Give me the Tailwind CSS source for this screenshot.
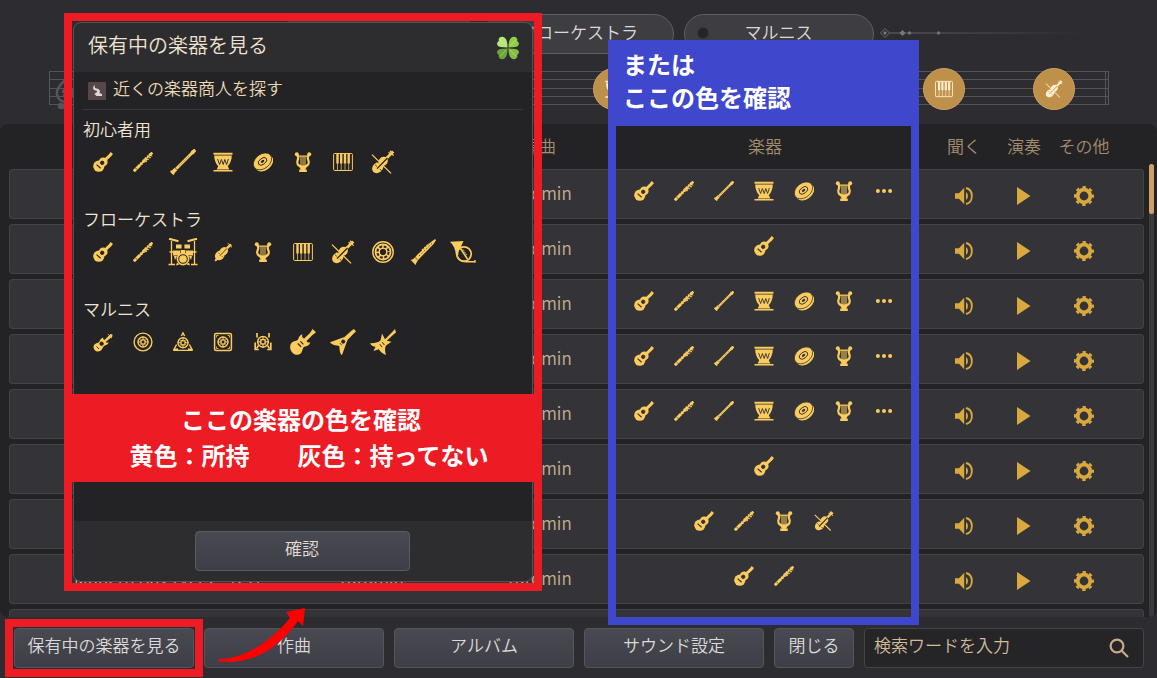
<!DOCTYPE html>
<html lang="ja">
<head>
  <meta charset="UTF-8">
  <meta name="viewport" content="width=device-width, initial-scale=1.0">
  <title>楽器の確認</title>
  <script src="https://cdn.jsdelivr.net/npm/@tailwindcss/browser@4"></script>
</head>
<body class="relative flex flex-col h-screen overflow-hidden bg-[#2d2d31] font-['Noto_Sans_CJK_JP',sans-serif] font-[350] text-[17px] leading-6 text-[#dcdad8]">

  <!-- Icon sprite: shapes take currentColor, cut-outs take the fill and stroke of the svg -->
  <svg class="absolute size-0" xmlns="http://www.w3.org/2000/svg">
    <symbol id="lute" viewBox="0 0 20 20">
      <g fill="currentColor" stroke="none"><circle cx="5.8" cy="14.2" r="5.6"/><circle cx="10.2" cy="9.9" r="4.4"/><path d="M10 8 16 2.2 17.6 0l2.400 2-2 2.400L12 10z"/></g>
      <circle cx="9.2" cy="10.8" r="1.7"/><path d="M3.6 12.6 7.6 16.2" stroke-width="1.2"/>
    </symbol>
    <symbol id="flute" viewBox="0 0 20 20">
      <g stroke="currentColor" fill="none"><path d="M.8 19.200 7 13" stroke-width="3"/><path d="M6 14 19 1" stroke-width="1.600"/><path d="M7.600 12.400 14 6" stroke-width="3" stroke-dasharray="2 1"/><path d="M10 8.600 17 1.800M12.400 10 19 3.600" stroke-width="1.500" stroke-dasharray="1.600 1.200"/><path d="M16.500 3.500 19.400.6" stroke-width="2.600"/></g>
      <path d="M2.400 15.800 4.400 17.800" stroke-width=".7"/>
    </symbol>
    <symbol id="recorder" viewBox="0 0 26 26">
      <g stroke="currentColor" fill="none"><path d="M2 24 24 2" stroke-width="2.800"/><path d="M.6 21.800 4.200 25.400M21.400 2 24 4.600" stroke-width="1.500"/><path d="M1.600 24.400 6 20" stroke-width="3.800"/><path d="M21.600 4.400 25.300.7" stroke-width="3.400"/></g>
      <path d="M9 17 19 7" stroke-width=".6" stroke-dasharray="1 1.600"/><path d="M5.200 19 7 20.800" stroke-width=".7"/>
    </symbol>
    <symbol id="drum" viewBox="0 0 20 20">
      <g fill="currentColor" stroke="none"><path d="M.5.8h19v2H.5zM1.200 3.600h17.600c0 4-1.400 8-4 10.600l1.600 3.200H3.600l1.600-3.200C2.600 11.600 1.200 7.600 1.200 3.600zM.5 18h19v1.600H.5z"/></g>
      <path d="M4.600 7 6.600 12.500 8.400 7.500 10.200 12.500 11.800 7.500 13.600 12.500 15.400 7" fill="none" stroke-width=".9"/>
    </symbol>
    <symbol id="cymbal" viewBox="0 0 20 20">
      <g transform="rotate(-38 10 10)"><ellipse cx="10.200" cy="12" rx="10" ry="6.600" fill="currentColor" stroke="none"/><ellipse cx="10" cy="9.200" rx="10.200" ry="7.200" fill="currentColor" stroke-width=".7"/><ellipse cx="10" cy="9.200" rx="4.800" ry="3" fill="none" stroke-width=".9"/><ellipse cx="10" cy="9.200" rx="2" ry="1.200" stroke="none"/></g>
    </symbol>
    <symbol id="lyre" viewBox="0 0 20 20">
      <g stroke="currentColor" fill="none"><path d="M4.200 3.200C7.500 7 2.600 8.500 4.600 12c1 2 3 2.600 5.400 2.600s4.400-.6 5.400-2.600c2-3.500-2.900-5 .4-8.800" stroke-width="2.200"/><path d="M5 4.200H15" stroke-width="1.300"/><path d="M8 4.500V13M10 4.500V13M12 4.500V13" stroke-width="1"/></g>
      <g fill="currentColor" stroke="none"><circle cx="3.800" cy="2.200" r="2"/><circle cx="16.200" cy="2.200" r="2"/><path d="M5.500 13.500h9L12.200 17.500h1.600V20H6.200v-2.500h1.600z"/></g>
    </symbol>
    <symbol id="piano" viewBox="0 0 20 20">
      <rect x=".6" y="1.500" width="18.800" height="17" rx="1" fill="none" stroke="currentColor" stroke-width="1"/>
      <path d="M3.300 2h2.400v9.500H3.300zM7 2h2.400v9.500H7zM10.800 2h2.400v9.500h-2.400zM14.500 2h2.400v9.500h-2.400z" fill="currentColor" stroke="none"/>
      <path d="M4.500 11v7M8.200 11v7M12 11v7M15.700 11v7" stroke="currentColor" stroke-width=".7"/>
    </symbol>
    <symbol id="violin" viewBox="0 0 24 24">
      <g fill="currentColor" stroke="none"><ellipse cx="6.800" cy="17.600" rx="6.200" ry="5" transform="rotate(-42 6.800 17.600)"/><ellipse cx="12.300" cy="11.200" rx="4.800" ry="4.300" transform="rotate(-42 12.300 11.200)"/><path d="M12 9.500 19 3l2-2.600 2.400 2.200L20.600 5 14 12z"/></g>
      <path d="M1 4.600 20 23.400M17.600 2.200 19.600 4.200M20.800 3.800 22.600 5.600M19 .8 20.600 2.400" fill="none" stroke="currentColor" stroke-width="1.300"/>
      <path d="M6 18.600 16.500 8" stroke-width="1.300"/><path d="M4.200 14.800 5.800 16.400M8.800 19 10.400 20.600M6 11.600 7.600 13.200" stroke-width=".9"/>
    </symbol>
    <symbol id="drumkit" viewBox="0 0 30 28">
      <g stroke="currentColor" fill="none" stroke-width="1.300"><path d="M3.500 3v23M26.500 3v23M.5 26.500h6.500M23 26.500h6.500M1.500 14h7M21.500 14h7"/><path d="M1 .8 10.500 3.200M29 .8 19.500 3.200" stroke-width="2.200"/><circle cx="15" cy="21" r="5.600" stroke-width="1.600"/></g>
      <g fill="currentColor" stroke="none"><path d="M8 6.500h5.600v4H8zM16.400 6.500H22v4h-5.600zM5 12.500h7v5H5zM18 12.500h7v5h-7zM12.600 12h4.800v3h-4.800zM6 18h3l-2 4zM24 18h-3l2 4z"/><circle cx="15" cy="21" r="3.800"/><path d="m9 24.500 2.500 2-3.500 1zM21 24.500l-2.500 2 3.500 1z"/></g>
    </symbol>
    <symbol id="cello" viewBox="0 0 20 20">
      <g fill="currentColor" stroke="none"><ellipse cx="6.800" cy="13.400" rx="5.200" ry="4.500" transform="rotate(-45 6.800 13.400)"/><ellipse cx="10.800" cy="9.200" rx="4.200" ry="3.800" transform="rotate(-45 10.800 9.200)"/><path d="m11 7.500 4.500-4.600 1.500-1.500 2 1.800-2 1.800-4.500 4.400zM3.200 15.200 1.600 18.400l1 1 3-2.200z"/></g>
      <path d="M6.800 13.800 14 6.400" stroke-width=".8"/><path d="M5.400 10.600 6.600 11.800M9 14.200 10.200 15.400" stroke-width=".7"/>
      <path d="M14.800 1.200 16.200 2.600M17.600 4 19 5.400" stroke="currentColor" stroke-width="1"/>
    </symbol>
    <symbol id="handpan" viewBox="0 0 22 22">
      <circle cx="11" cy="11" r="10.200" fill="none" stroke="currentColor" stroke-width="1.500"/><circle cx="11" cy="11" r="8.400" fill="currentColor" stroke="none"/>
      <circle cx="11" cy="11" r="2.700"/><circle cx="11" cy="11" r="5.600" fill="none" stroke-width="2" stroke-dasharray="2.800 1.600"/>
    </symbol>
    <symbol id="clarinet" viewBox="0 0 26 26">
      <g fill="currentColor" stroke="none"><path d="M.5 20.800C3 21 5 18.500 7 16L21 3l4-3 1 1.200-2.600 4L10 19c-2 2-3.600 4-4.400 7z"/></g>
      <path d="M9 17 23 3.500" stroke-width=".8" stroke-dasharray="1.500 1.800"/><path d="M5.200 18.500 7.500 20.800" stroke-width=".7"/>
      <path d="M12 11 19 4.600" stroke="currentColor" stroke-width="1.200" stroke-dasharray="2 1"/>
    </symbol>
    <symbol id="horn" viewBox="0 0 26 22">
      <path d="M0 .8 13.600 0C12 2.500 12.200 4.200 9.600 8 8.600 10 8.200 12 8.400 14L5.800 13.500C5.600 9 3.600 4 0 .8z" fill="currentColor" stroke="none"/>
      <g stroke="currentColor" fill="none"><circle cx="14" cy="13" r="7.200" stroke-width="1.700"/><path d="M6.500 12C7 18 11 20.800 16 20.800H25.500M25 19v2.800" stroke-width="1.400"/><path d="M10.500 7.500 17.500 18" stroke-width="1.600"/><path d="M13 8.500 17 14.500" stroke-width="1" stroke-dasharray="1.500 1"/></g>
    </symbol>
    <symbol id="mandolin" viewBox="0 0 20 20">
      <g fill="currentColor" stroke="none"><path d="M1.200 12.800C3 10.500 5.500 11.500 6.600 9.200 7 7.500 8.500 6 10.200 5.500 9.800 7 10.500 7.500 11.500 8L17.500 2l2 .6-.2 2L12.600 10c1 .8 2 .6 3.200.4-.8 1.600-2 2.600-3.800 3C10 14 10 16 8.600 17.800 7 20 3.500 20 1.800 18.200.2 16.500.2 14.500 1.200 12.800z"/></g>
      <circle cx="8.600" cy="11.700" r="1.700"/><path d="M3.500 14.500 6 17" stroke-width=".9"/><path d="M15 2.200 16.400 3.600M17.600 5 19 6.200" stroke="currentColor" stroke-width=".9"/>
    </symbol>
    <symbol id="core" viewBox="0 0 12 12">
      <g fill="none" stroke="currentColor"><circle cx="6" cy="6" r="5" stroke-width="1.400"/><path d="M6 .5V4M6 8v3.500M.5 6H4M8 6h3.500" stroke-width="1.100"/><rect x="4" y="4" width="4" height="4" stroke-width="1.300"/></g>
    </symbol>
    <symbol id="amp-circle" viewBox="0 0 20 20">
      <circle cx="10" cy="10" r="8.900" fill="none" stroke="currentColor" stroke-width="1.400"/><use href="#core" x="4" y="4" width="12" height="12"/>
    </symbol>
    <symbol id="amp-triangle" viewBox="0 0 20 20">
      <path d="M8.400 4 10 .8 11.600 4M3.600 12.500.8 17.800 5 17M16.400 12.500l2.800 5.300L15 17M1 18.400h18" fill="none" stroke="currentColor" stroke-width="1.400"/><use href="#core" x="4" y="4.800" width="12" height="12"/>
    </symbol>
    <symbol id="amp-square" viewBox="0 0 20 20">
      <rect x="1.600" y="1.600" width="16.800" height="16.800" rx="1.500" fill="none" stroke="currentColor" stroke-width="1.500"/><path d="M3.500 5.500v-2h2M14.500 3.500h2v2M3.500 14.500v2h2M16.500 14.500v2h-2" fill="none" stroke="currentColor" stroke-width=".8"/><use href="#core" x="4" y="4" width="12" height="12"/>
    </symbol>
    <symbol id="amp-bracket" viewBox="0 0 20 20">
      <path d="M4 1v4.500M16 1v4.500M2.200 10.500v7h3.600M17.800 10.500v7h-3.600" fill="none" stroke="currentColor" stroke-width="1.700"/><path d="m5.500 13.500-2 3M14.500 13.500l2 3" stroke="currentColor" stroke-width="1.500"/><use href="#core" x="3.600" y="3.400" width="12.800" height="12.800"/>
    </symbol>
    <symbol id="guitar" viewBox="0 0 26 26">
      <path d="M1 14.500C3.500 11 7.500 13 8.500 9.500 9 7 10.500 5.500 12.500 5.400 11.500 7.500 12.500 9 14.200 9.600L20 4l2.600-4L26 3.200 22.500 6 16.500 12c.8 1.500 2 1.700 3.800 1.300-.8 2.500-2.600 3.900-5 4.200-3 .5-2.300 4-4 6.200C8.500 27 4.500 26 2.200 23.500-.2 20.800-.4 17 1 14.500z" fill="currentColor" stroke="none"/>
      <path d="M7.800 14.500 11.200 17.900M10.400 12.400 13.400 15.400" stroke-width="1.200"/>
    </symbol>
    <symbol id="guitar-v" viewBox="0 0 26 26">
      <path d="M0 13.200 14.500 8 22 1.200 24 0l2 2.400L24 4.200 17.500 11 12 26C10.500 25.500 9.600 23 9.300 17 6.500 16.500 1.500 15.800 0 13.200z" fill="currentColor" stroke="none"/>
      <circle cx="13.200" cy="12.600" r="1.600"/><path d="M9.500 13.800 12 16.300" stroke-width=".8"/>
    </symbol>
    <symbol id="guitar-star" viewBox="0 0 26 26">
      <path d="M0 14.200C4 14.500 8 13.500 10.500 11.500L12 4.500 15 10.300 22.500 2.800 25 0l1 3.500-2.500 2L16.800 11.800 21.500 12.800 16 16.500C14.500 19 15 22.500 16 26 13 25 10.500 23 8.800 20.300L3.500 22 5.500 17.800C3 17.500 1 16.500 0 14.200z" fill="currentColor" stroke="none"/>
      <path d="M9.800 15.200 12.200 18.200M12.200 13.200 14.400 16" stroke-width="1"/>
    </symbol>
    <symbol id="more" viewBox="0 0 20 20">
      <g fill="currentColor" stroke="none"><circle cx="3.900" cy="10" r="2"/><circle cx="10" cy="10" r="2"/><circle cx="16.100" cy="10" r="2"/></g>
    </symbol>
    <symbol id="speaker" viewBox="0 0 20 20">
      <path d="M1 7.200h4L10.200 1.800v16.400L5 12.800H1zM12 6.200c2.600 1 2.600 6.600 0 7.600z" fill="currentColor" stroke="none"/><path d="M12 2c7.800 1.800 7.800 14.200 0 16" fill="none" stroke="currentColor" stroke-width="1.800"/>
    </symbol>
    <symbol id="play" viewBox="0 0 20 20"><path d="M3 1v18l13.500-9z" fill="currentColor" stroke="none"/></symbol>
    <symbol id="gear" viewBox="0 0 20 20">
      <circle cx="10" cy="10" r="9" fill="none" stroke="currentColor" stroke-width="2" stroke-dasharray="3.530" stroke-dashoffset="1.760"/><circle cx="10" cy="10" r="6.300" fill="none" stroke="currentColor" stroke-width="3.800"/>
    </symbol>
    <symbol id="ornament" viewBox="0 0 205 14">
      <rect x="10" y="6.500" width="195" height="1" fill="url(#fade)"/><path d="M5 2.500 9.500 7 5 11.500.5 7z" fill="none" stroke="#66666e"/><path d="m5 5 2 2-2 2-2-2zM22.500 4l3 3-3 3-3-3zM29.500 5l2 2-2 2-2-2zM58.500 5l2 2-2 2-2-2z" fill="#77777c" stroke="none"/>
    </symbol>
    <linearGradient id="fade"><stop stop-color="#66666a"/><stop offset="1" stop-color="#66666a" stop-opacity="0"/></linearGradient>
  </svg>

  <header class="flex flex-col shrink-0 h-[124px] pt-[14px]">
    <div class="flex justify-center items-center">
      <svg class="w-[205px] h-[14px] mr-[6px] mb-[3px] -scale-x-100"><use href="#ornament"/></svg>
      <div class="flex gap-[10px]">
        <button class="w-[190px] h-10 pb-1 rounded-full border border-[#5e5e62] bg-[#3e3e42]">初心者用</button>
        <button class="w-[190px] h-10 pb-1 rounded-full border border-[#5e5e62] bg-[#3e3e42]">フローケストラ</button>
        <button class="relative w-[190px] h-10 pb-1 rounded-full border border-[#5e5e62] bg-[#3e3e42]"><span class="absolute left-3 top-3 size-3 rounded-full border border-[#35353a] bg-[#252527]"></span>マルニス</button>
      </div>
      <svg class="w-[205px] h-[14px] ml-[6px] mb-[3px]"><use href="#ornament"/></svg>
    </div>
    <div class="relative ml-[49px] mr-12 mt-[13px]">
      <div class="absolute inset-x-0 top-1 h-[34px] flex flex-col justify-between border-x border-[#58585c]">
        <i class="h-px bg-[#545458]"></i><i class="h-px bg-[#545458]"></i><i class="h-px bg-[#545458]"></i><i class="h-px bg-[#545458]"></i><i class="h-px bg-[#545458]"></i>
        <i class="absolute right-[2px] inset-y-0 w-px bg-[#545458]"></i>
      </div>
      <svg class="absolute left-[6px] top-2 w-6 h-9" viewBox="0 0 24 36" fill="none" stroke="#56565a" stroke-width="2.500"><path d="M14 26C4 29-1 20 4 12 8 5 16 2 15 0M8 18c0-6 10-7 10 0s-9 7-9 1M13 8v20c0 5-6 6-7 3"/><circle cx="6" cy="31" r="2" fill="#56565a"/></svg>
      <div id="notes" class="relative flex justify-end gap-[68px] pr-[34px] pt-px"></div>
    </div>
  </header>

  <main class="flex flex-1 min-h-0 overflow-hidden rounded-lg bg-[#232325] pl-[9px] pr-[3px]">
    <table class="flex-1 table-fixed w-full border-separate border-spacing-x-0 border-spacing-y-[5px] text-center whitespace-nowrap">
      <colgroup>
        <col><col class="w-[222px]"><col class="w-[114px]"><col class="w-[338px]"><col class="w-[60px]"><col class="w-[60px]"><col class="w-[60px]"><col class="w-[30px]">
      </colgroup>
      <thead class="text-[#a48c6e]">
        <tr class="h-[35px]">
          <th class="pb-0.5 font-[350]">曲名</th><th class="pb-0.5 font-[350]">作曲</th><th class="pb-0.5 font-[350]">編曲</th><th class="pb-0.5 font-[350]">楽器</th><th class="pb-0.5 font-[350]">聞く</th><th class="pb-0.5 font-[350]">演奏</th><th class="pb-0.5 font-[350]">その他</th><td></td>
        </tr>
      </thead>
      <tbody id="songs" class="text-[#c4b092]"></tbody>
    </table>
    <div class="w-[5px] ml-[5px] mt-10 rounded-full bg-[#3b3b3e]"><div class="h-[50px] rounded-full bg-[#cda06c]"></div></div>
  </main>

  <footer class="flex shrink-0 gap-[10px] h-[61px] pt-[11px] pl-[14px] pr-[13px]">
    <button class="relative w-[180px] h-10 pb-[6px] rounded-sm border border-[#55555c] bg-linear-to-b from-[#494952] to-[#3e3e47]">保有中の楽器を見る<span class="absolute -inset-[10px] border-8 border-[#ed1c24]"></span></button>
    <button class="w-[180px] h-10 pb-[6px] rounded-sm border border-[#55555c] bg-linear-to-b from-[#494952] to-[#3e3e47]">作曲</button>
    <button class="w-[180px] h-10 pb-[6px] rounded-sm border border-[#55555c] bg-linear-to-b from-[#494952] to-[#3e3e47]">アルバム</button>
    <button class="w-[180px] h-10 pb-[6px] rounded-sm border border-[#55555c] bg-linear-to-b from-[#494952] to-[#3e3e47]">サウンド設定</button>
    <button class="w-20 h-10 pb-[6px] rounded-sm border border-[#55555c] bg-linear-to-b from-[#494952] to-[#3e3e47]">閉じる</button>
    <label class="flex flex-1 items-center h-10 pl-[9px] pr-[14px] rounded-sm border border-[#434347] bg-[#252528]">
      <input type="text" aria-label="検索" placeholder="検索ワードを入力" class="flex-1 min-w-0 pb-[6px] bg-transparent outline-none placeholder:text-[#d2bb9b]">
      <svg class="size-5" viewBox="0 0 20 20" fill="none" stroke="#c8ab8a" stroke-width="2.200"><circle cx="8" cy="8" r="6.400"/><path d="m12.500 12.500 6.500 6.500"/></svg>
    </label>
  </footer>

  <!-- Blue callout over the instrument column -->
  <div class="absolute left-[608px] top-10 w-[311px] h-[585px] border-8 border-[#3f48cc]">
    <p class="-mt-px h-[79px] pl-[7px] bg-[#3f48cc] text-white text-2xl leading-[33px] font-bold">または<br>ここの色を確認</p>
  </div>

  <!-- Red callout with the dialog inside -->
  <div class="absolute left-16 top-[13px] w-[478px] h-[578px] p-px border-8 border-[#ed1c24]">
    <section role="dialog" aria-labelledby="dialogTitle" class="flex flex-col h-full rounded-lg border border-[#515456] bg-[#2d2d30] overflow-hidden text-[#efe4d1]">
      <div class="flex justify-between items-center h-[49px] pl-[14px] pr-3">
        <h1 id="dialogTitle" class="pb-[6px] text-xl">保有中の楽器を見る</h1>
        <svg class="size-6" viewBox="0 0 24 24">
          <defs><path id="leaf" d="M11.500 11.500 4.500 11C.5 10.500 0 6.500 3 5 1.500 2 5.500-.5 8.500 1.500 11 3.500 11.500 7 11.500 11.500z"/></defs>
          <path d="m12 12 1 2" stroke="#567a1d"/><use href="#leaf" fill="#b5e878"/><use href="#leaf" fill="#8fcd45" transform="matrix(-1 0 0 1 24 0)"/><use href="#leaf" fill="#6da636" transform="matrix(1 0 0 -1 0 24)"/><use href="#leaf" fill="#83bd42" transform="rotate(180 12 12)"/>
          <path d="M4.500 4 10 10M19.500 4 14 10M4.500 20 10 14M19.500 20 14 14" stroke="#d8f5a8" stroke-opacity=".6" stroke-width=".8"/>
        </svg>
      </div>
      <div class="flex-1 px-[9px] bg-[#232325]">
        <div class="flex items-center gap-[7px] h-[38px] pl-[5px] border-b border-[#39393b] text-[#ead9b4]">
          <svg class="size-[18px]" viewBox="0 0 18 18"><rect width="18" height="18" rx="1" fill="#57474b"/><path d="M7 3C4 5 4.500 8 8 8.500 10 9 9 10.500 7.500 11L6.500 12l2 2H14v-2l-2.500-1C13 8 10.500 6.500 8 6.500 6.500 6 6.500 4.500 7 3z" fill="#ded8da"/></svg>
          <a href="#" class="pb-[6px]">近くの楽器商人を探す</a>
        </div>
        <div id="owned"></div>
      </div>
      <div class="h-[60px] pt-[10px] text-center">
        <button class="w-[215px] h-10 pb-[6px] mr-0.5 rounded-sm border border-[#5a5a62] bg-linear-to-b from-[#494952] to-[#3e3e47] text-[#e2dcd6]">確認</button>
      </div>
    </section>
    <p class="absolute inset-x-0 top-[373px] h-[88px] pt-[7px] bg-[#ed1c24] text-center text-white text-2xl leading-9 font-bold"><span class="pr-1">ここの楽器の色を確認</span><br><span class="pl-3">黄色：所持　　灰色：持ってない</span></p>
  </div>

  <svg class="absolute left-[216px] bottom-[14px] w-[92px] h-[58px]" viewBox="0 0 92 58" fill="#ff0000"><path d="M2 53C28 53 54 36 74 12L70 6 89 2 87 20 82 15C62 44 33 60 2 55z"/></svg>

<script>
  const full = ['lute', 'flute', 'recorder', 'drum', 'cymbal', 'lyre', 'more'];
  // title, composer, arranger, instruments
  const songs = [
    ['', '', 'Yuromin', full],
    ['', '', 'Yuromin', ['lute']],
    ['', '', 'Yuromin', full],
    ['', '', 'Yuromin', full],
    ['', '', 'Yuromin', full],
    ['', '', 'Yuromin', ['lute']],
    ['', '', 'Yuromin', ['lute', 'flute', 'lyre', 'violin']],
    ['Modern Boys ver.2 - (21)', 'Yuromin', 'Yuromin', ['lute', 'flute']],
    ['', '', '', []]
  ];

  const beginner = ['lute', 'flute', 'recorder', 'drum', 'cymbal', 'lyre', 'piano', 'violin'];
  const owned = [
    ['初心者用', beginner],
    ['フローケストラ', ['lute', 'flute', 'drumkit', 'cello', 'lyre', 'piano', 'violin', 'handpan', 'clarinet', 'horn']],
    ['マルニス', ['mandolin', 'amp-circle', 'amp-triangle', 'amp-square', 'amp-bracket', 'guitar', 'guitar-v', 'guitar-star']]
  ];

  // Icons that are drawn larger than the usual 20px in the dialog
  const sizes = {
    recorder: 'size-[26px]', drumkit: 'w-[30px] h-7', violin: 'size-6', handpan: 'size-[22px]',
    clarinet: 'size-[26px]', horn: 'w-[26px] h-[22px]', guitar: 'size-[26px]',
    'guitar-v': 'size-[26px]', 'guitar-star': 'size-[26px]'
  };

  function icon(name, cls) {
    return `<svg class="${cls}"><use href="#${name}"/></svg>`;
  }

  document.getElementById('notes').innerHTML = beginner.map(name => `
    <button aria-label="${name}" class="flex items-center justify-center shrink-0 size-[42px] rounded-full border border-[#cfa062] bg-[#be9049] text-[#fff1d0]">
      ${icon(name, 'size-[18px] fill-[#be9049] stroke-[#be9049]')}
    </button>`).join('');

  document.getElementById('songs').innerHTML = songs.map(([title, composer, arranger, icons]) => `
    <tr class="h-[50px]">
      <td class="h-[50px] pl-16 pb-0.5 text-left border-y border-l rounded-l-sm border-[#434346] bg-[#343438]">${title}</td>
      <td class="pb-0.5 border-y border-[#434346] bg-[#343438]">${composer}</td>
      <td class="pb-0.5 border-y border-[#434346] bg-[#343438]">${arranger}</td>
      <td class="border-y border-[#434346] bg-[#343438]">
        <div class="flex justify-center gap-5 pb-[6px] pr-0.5 text-[#fbcb5d]">
          ${icons.map(name => icon(name, 'size-5 fill-[#343438] stroke-[#343438]')).join('')}
        </div>
      </td>
      <td class="border-y border-[#434346] bg-[#343438] text-[#d9a93f]"><button aria-label="聞く" class="block mx-auto mt-[3px]">${icon('speaker', 'size-5')}</button></td>
      <td class="border-y border-[#434346] bg-[#343438] text-[#d9a93f]"><button aria-label="演奏" class="block mx-auto mt-[3px]">${icon('play', 'size-5')}</button></td>
      <td class="border-y border-[#434346] bg-[#343438] text-[#d9a93f]"><button aria-label="その他" class="block mx-auto mt-[3px]">${icon('gear', 'size-5 stroke-[#343438]')}</button></td>
      <td class="border-y border-r rounded-r-sm border-[#434346] bg-[#343438]"></td>
    </tr>`).join('');

  document.getElementById('owned').innerHTML = owned.map(([label, icons]) => `
    <div class="h-[90px] pt-[7px]">
      <h2 class="h-[25px]">${label}</h2>
      <div class="flex h-10 text-[#fbcb5d]">
        ${icons.map(name => `<span class="flex items-center justify-center w-10">${icon(name, (sizes[name] || 'size-5') + ' fill-[#232325] stroke-[#232325]')}</span>`).join('')}
      </div>
    </div>`).join('');
</script>
</body>
</html>
